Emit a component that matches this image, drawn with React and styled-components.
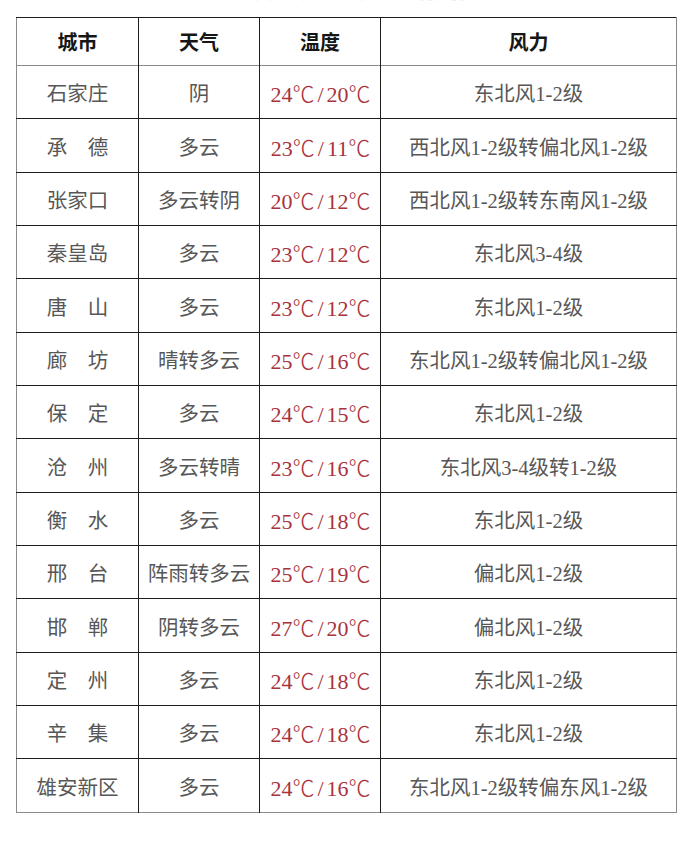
import styled, { createGlobalStyle } from "styled-components";

const GlobalStyle = createGlobalStyle`
	body {
		margin: 0;
		background: #fff;
		font-family: "Liberation Serif", "Noto Sans CJK SC", serif;
	}
`;

const COLORS = {
	text: "#575757",
	head: "#161616",
	temp: "#a8333d",
	line: "#1e1e1e",
	outer: "#8a8a8a",
};

const ROWS = [
	["石家庄", "阴", ["24", "20"], "东北风1-2级"],
	["承　德", "多云", ["23", "11"], "西北风1-2级转偏北风1-2级"],
	["张家口", "多云转阴", ["20", "12"], "西北风1-2级转东南风1-2级"],
	["秦皇岛", "多云", ["23", "12"], "东北风3-4级"],
	["唐　山", "多云", ["23", "12"], "东北风1-2级"],
	["廊　坊", "晴转多云", ["25", "16"], "东北风1-2级转偏北风1-2级"],
	["保　定", "多云", ["24", "15"], "东北风1-2级"],
	["沧　州", "多云转晴", ["23", "16"], "东北风3-4级转1-2级"],
	["衡　水", "多云", ["25", "18"], "东北风1-2级"],
	["邢　台", "阵雨转多云", ["25", "19"], "偏北风1-2级"],
	["邯　郸", "阴转多云", ["27", "20"], "偏北风1-2级"],
	["定　州", "多云", ["24", "18"], "东北风1-2级"],
	["辛　集", "多云", ["24", "18"], "东北风1-2级"],
	["雄安新区", "多云", ["24", "16"], "东北风1-2级转偏东风1-2级"],
];

const Page = styled.div`
	width: 690px;
	height: 845px;
	overflow: hidden;
`;

const TitleStrip = styled.div`
	height: 17px;
	overflow: hidden;
	text-align: center;
	padding-right: 14px;
`;

const Title = styled.div`
	margin-top: -22px;
	font-size: 24px;
	line-height: 24px;
	letter-spacing: 1px;
	color: #ececec;
`;

const Table = styled.table`
	margin-left: 16px;
	width: 661px;
	border-collapse: collapse;
	table-layout: fixed;
	border-top: 1px solid ${COLORS.line};
	border-left: 1px solid ${COLORS.outer};
	border-right: 1px solid ${COLORS.outer};
	border-bottom: 1px solid ${COLORS.outer};
`;

const HeadRow = styled.tr`
	height: 48px;
	border-bottom: 1px solid ${COLORS.outer};
`;

const Row = styled.tr`
	height: 53.35px;
	border-top: 1px solid ${COLORS.line};
`;

const Cell = styled.td`
	padding: 0;
	text-align: center;
	vertical-align: middle;
	font-size: ${({ $head, $temp }) =>
		$head ? "20px" : $temp ? "22px" : "20.5px"};
	font-weight: ${({ $head }) => ($head ? 700 : 400)};
	color: ${({ $head, $temp }) =>
		$head ? COLORS.head : $temp ? COLORS.temp : COLORS.text};
	white-space: nowrap;
	& + & {
		border-left: 1px solid ${COLORS.line};
	}
`;

const HeadCell = styled(Cell).attrs({ as: "th", $head: true })``;

const Degree = styled.span`
	font-family: "Noto Sans CJK SC", sans-serif;
	font-weight: 300;
	letter-spacing: -1px;
`;

const Slash = styled.span`
	margin: 0 3px 0 4px;
`;

const Temp = ({ high, low }) => (
	<>
		{high}
		<Degree>℃</Degree>
		<Slash>/</Slash>
		{low}
		<Degree>℃</Degree>
	</>
);

export default function App() {
	return (
		<Page>
			<GlobalStyle />
			<TitleStrip>
				<Title>河北省主要城市天气预报</Title>
			</TitleStrip>
			<Table>
				<colgroup>
					<col style={{ width: 122 }} />
					<col style={{ width: 121 }} />
					<col style={{ width: 121 }} />
					<col />
				</colgroup>
				<thead>
					<HeadRow>
						<HeadCell>城市</HeadCell>
						<HeadCell>天气</HeadCell>
						<HeadCell>温度</HeadCell>
						<HeadCell>风力</HeadCell>
					</HeadRow>
				</thead>
				<tbody>
					{ROWS.map(([city, weather, [high, low], wind]) => (
						<Row key={city}>
							<Cell>{city}</Cell>
							<Cell>{weather}</Cell>
							<Cell $temp>
								<Temp high={high} low={low} />
							</Cell>
							<Cell>{wind}</Cell>
						</Row>
					))}
				</tbody>
			</Table>
		</Page>
	);
}
